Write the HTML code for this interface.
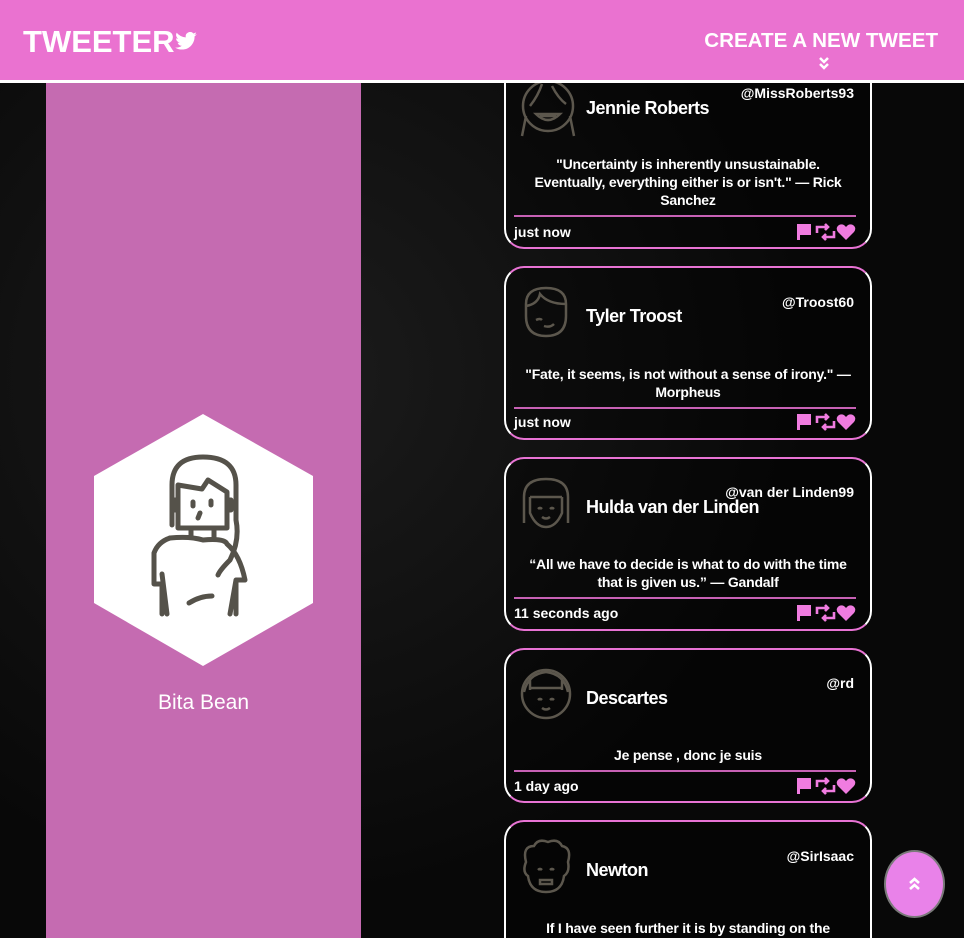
<!DOCTYPE html>
<html><head><meta charset="utf-8"><style>
*{box-sizing:border-box;margin:0;padding:0}
html,body{width:964px;height:938px;overflow:hidden}
body{background:#0d0d0d;font-family:"Liberation Sans",sans-serif;color:#fff;position:relative}
.bg{position:absolute;inset:0;background:radial-gradient(circle at 30% 40%,#1c1c1c,#080808 60%),#0b0b0b}
header{position:absolute;left:0;top:0;width:964px;height:83px;background:#ea72d0;border-bottom:3px solid #fff;z-index:5}
.logo{position:absolute;left:23px;top:24px;font-weight:900;font-size:31px;color:#fff;white-space:nowrap}
.create{position:absolute;right:26px;top:30px;font-weight:900;font-size:20px;transform:scaleX(1.03);transform-origin:right}
.side{position:absolute;left:46px;top:83px;width:315px;height:855px;background:#c56bb1}
.name{position:absolute;left:0;width:315px;top:608px;text-align:center;font-size:21px;color:#fff}
.card{position:absolute;left:504px;width:368px;border:2px solid #fff;border-top-color:#e873d4;border-bottom-color:#e873d4;border-radius:20px;background:rgba(0,0,0,.35);overflow:hidden}
.card .av{position:absolute;left:10px;top:14px}
.card .nm{position:absolute;left:80px;font-size:18px;font-weight:bold;letter-spacing:-.5px}
.card .hd{position:absolute;right:16px;font-size:14px;font-weight:bold}
.card .tx{position:absolute;left:10px;right:10px;text-align:center;font-size:14px;font-weight:bold;line-height:18px;letter-spacing:-.2px}
.card .ln{position:absolute;left:8px;right:14px;height:2px;background:#c761b5}
.card .tm{position:absolute;left:8px;font-size:14px;font-weight:bold}
.card .ic{position:absolute;right:14px}
</style></head><body>
<div class="bg"></div>
<header><div class="logo">TWEETER<svg width="22" height="18" viewBox="0 0 24 20" style="vertical-align:2px"><path fill="#fff" d="M24 2.4a10 10 0 0 1-2.8.8A5 5 0 0 0 23.3.4a10 10 0 0 1-3.1 1.2A4.9 4.9 0 0 0 11.8 6 14 14 0 0 1 1.7.9a4.9 4.9 0 0 0 1.5 6.6 4.9 4.9 0 0 1-2.2-.6 4.9 4.9 0 0 0 3.9 4.9 5 5 0 0 1-2.2.1 4.9 4.9 0 0 0 4.6 3.4A10 10 0 0 1 0 17.3 14 14 0 0 0 7.5 19.5c9 0 14-7.5 14-14v-.6A10 10 0 0 0 24 2.4z"/></svg></div>
<div class="create">CREATE A NEW TWEET</div>
<svg style="position:absolute;left:818px;top:57px" width="12" height="13" viewBox="0 0 12 13" fill="none" stroke="#fff" stroke-width="2.5"><path d="M2 1 L6 5 L10 1 M2 7 L6 11 L10 7"/></svg></header>
<div class="side">
<svg style="position:absolute;left:44px;top:327px" width="230" height="260" viewBox="0 0 230 260">
<polygon points="113,4 4,66 4,193 113,256 223,193 223,66" fill="#fff"/>
<g fill="none" stroke="#55524a" stroke-width="5" stroke-linecap="round" stroke-linejoin="round">
<path d="M82 115 V75 Q82 47 113 47 Q146 47 146 75 V110 Q150 130 140 150 Q130 160 128 165"/>
<path d="M88 75 L112 79 L118 70 L137 82 V118 H88 Z"/>
<path d="M88 90 H84 V100 H88 M137 90 H141 V100 H137"/>
<path d="M101 118 V127 M124 118 V127"/>
<path d="M103 92 V96 M121 91 V95 M110 103 L108 108"/>
<path d="M80 128 Q68 132 64 143 V174 H72 V204 M72 164 L77 204"/>
<path d="M80 128 Q100 126 113 130 Q135 128 137 134 Q150 145 155 170 H146 V204 M146 170 L140 204"/>
<path d="M99 193 Q110 186 122 186"/>
</g></svg>
<div class="name">Bita Bean</div></div>

<svg width="0" height="0" style="position:absolute"><defs><g id="ics"><path fill="#f07ce0" d="M1 1 H15 V12 H4 V17 H1 Z"/><g fill="none" stroke="#f07ce0" stroke-width="2.6"><path d="M21 10 V4 H32 M29 1 L32 4 L29 7 M38 8 V14 H27 M30 11 L27 14 L30 17"/></g><path fill="#f07ce0" d="M50 17 L42 9 Q39 5 43 2 Q47 0 50 4 Q53 0 57 2 Q61 5 58 9 Z"/></g></defs></svg>

<div class="card" style="top:40px;height:209px">
<svg class="av" style="top:34px" width="64" height="64" viewBox="0 0 64 64" fill="none" stroke="#5c574d" stroke-width="2.5"><circle cx="32" cy="30" r="25"/><path d="M14 30 Q22 20 26 8 M36 10 Q42 22 50 28 M20 38 Q32 50 44 38 Z M24 40 H40"/><path d="M10 40 L6 60 M54 40 L58 60"/></svg>
<div class="nm" style="top:56px">Jennie Roberts</div><div class="hd" style="top:43px">@MissRoberts93</div>
<div class="tx" style="top:113px">"Uncertainty is inherently unsustainable.<br>Eventually, everything either is or isn't." — Rick<br>Sanchez</div>
<div class="ln" style="top:173px"></div><div class="tm" style="top:182px">just now</div><svg class="ic" style="top:181px" width="60" height="18"><use href="#ics"/></svg></div>

<div class="card" style="top:266px;height:174px">
<svg class="av" width="60" height="60" viewBox="0 0 60 60" fill="none" stroke="#5c574d" stroke-width="2.5"><path d="M10 22 Q10 6 30 6 Q50 6 50 22 V34 Q50 54 30 54 Q10 54 10 34 Z"/><path d="M10 24 Q22 22 24 12 Q32 22 50 22"/><path d="M20 38 Q24 36 26 38 M28 44 Q34 46 38 42"/></svg>
<div class="nm" style="top:38px">Tyler Troost</div><div class="hd" style="top:26px">@Troost60</div>
<div class="tx" style="top:97px">"Fate, it seems, is not without a sense of irony." —<br>Morpheus</div>
<div class="ln" style="top:139px"></div><div class="tm" style="top:146px">just now</div><svg class="ic" style="top:145px" width="60" height="18"><use href="#ics"/></svg></div>

<div class="card" style="top:457px;height:174px">
<svg class="av" width="60" height="60" viewBox="0 0 60 60" fill="none" stroke="#5c574d" stroke-width="2.5"><path d="M8 50 V24 Q8 6 30 6 Q52 6 52 24 V50 M14 24 H46 M14 24 V40 Q20 54 30 54 Q40 54 46 40 V24"/><path d="M22 36 Q24 34 26 36 M34 36 Q36 34 38 36 M26 44 Q30 47 34 44"/></svg>
<div class="nm" style="top:38px">Hulda van der Linden</div><div class="hd" style="top:25px">@van der Linden99</div>
<div class="tx" style="top:96px">“All we have to decide is what to do with the time<br>that is given us.” — Gandalf</div>
<div class="ln" style="top:138px"></div><div class="tm" style="top:146px">11 seconds ago</div><svg class="ic" style="top:145px" width="60" height="18"><use href="#ics"/></svg></div>

<div class="card" style="top:648px;height:155px">
<svg class="av" width="60" height="60" viewBox="0 0 60 60" fill="none" stroke="#5c574d" stroke-width="2.5"><circle cx="30" cy="30" r="24"/><path d="M8 28 Q12 10 30 8 Q48 10 52 28 M14 26 V14 M46 26 V14 M14 24 H46"/><path d="M22 36 Q24 34 26 36 M34 36 Q36 34 38 36 M26 44 Q30 47 34 44"/></svg>
<div class="nm" style="top:38px">Descartes</div><div class="hd" style="top:25px">@rd</div>
<div class="tx" style="top:96px">Je pense , donc je suis</div>
<div class="ln" style="top:120px"></div><div class="tm" style="top:128px">1 day ago</div><svg class="ic" style="top:127px" width="60" height="18"><use href="#ics"/></svg></div>

<div class="card" style="top:820px;height:160px">
<svg class="av" width="60" height="60" viewBox="0 0 60 60" fill="none" stroke="#5c574d" stroke-width="2.5"><path d="M10 26 Q6 10 18 10 Q22 2 32 6 Q42 2 46 10 Q56 12 52 26 Q54 36 48 40 Q46 56 30 56 Q14 56 12 40 Q6 36 10 26 Z"/><path d="M22 34 Q24 32 26 34 M34 34 Q36 32 38 34 M24 44 H36 V48 H24 Z"/></svg>
<div class="nm" style="top:38px">Newton</div><div class="hd" style="top:26px">@SirIsaac</div>
<div class="tx" style="top:97px">If I have seen further it is by standing on the</div></div>

<div style="position:absolute;left:884px;top:850px;width:61px;height:68px;border-radius:50%;background:#e982e9;border:2px solid #7a7a7a"></div>
<svg style="position:absolute;left:908px;top:877px" width="13" height="14" viewBox="0 0 13 14" fill="none" stroke="#fff" stroke-width="2.6"><path d="M2 6 L6.5 2 L11 6 M2 12 L6.5 8 L11 12"/></svg>
</body></html>
